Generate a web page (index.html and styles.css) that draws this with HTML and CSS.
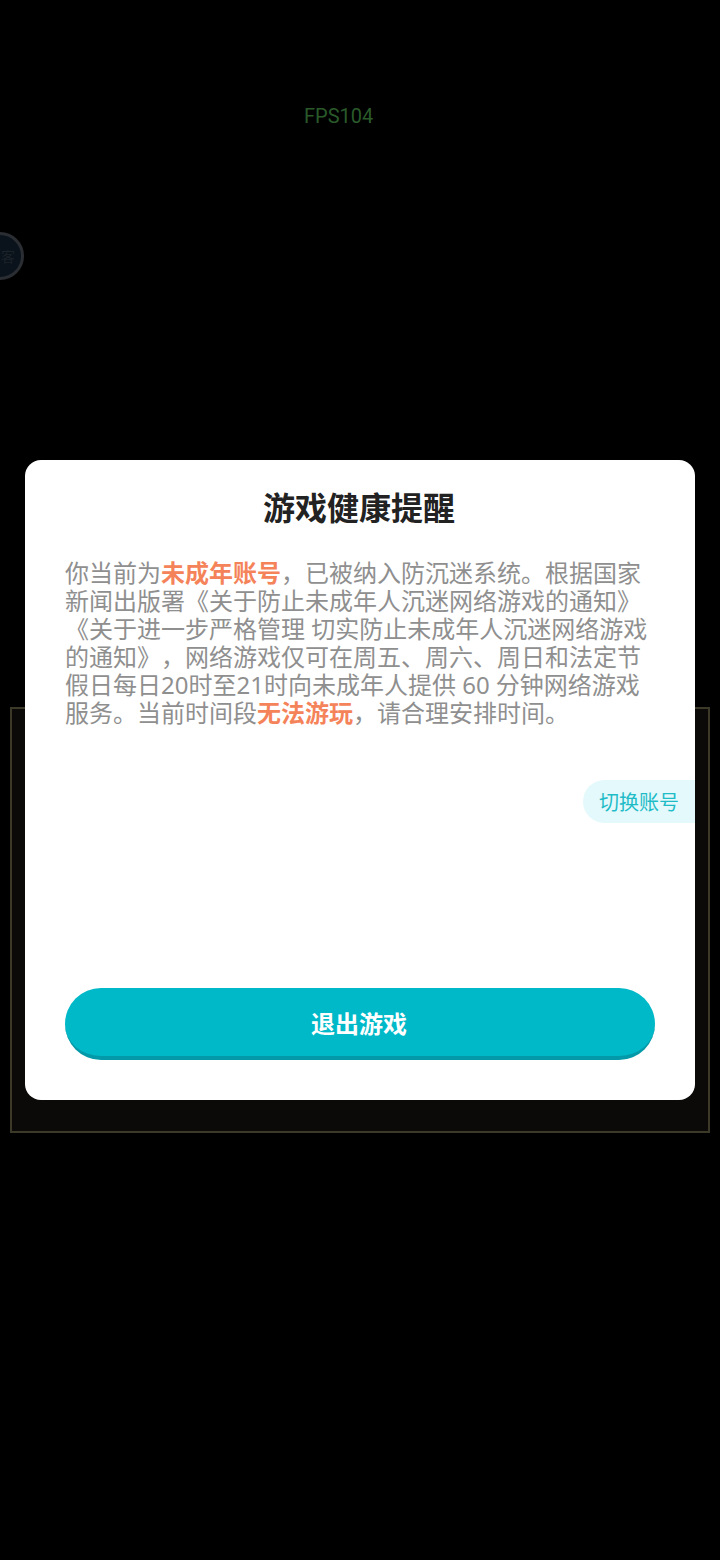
FILE: index.html
```html
<!DOCTYPE html>
<html lang="zh-CN">

<head>
    <meta charset="UTF-8">
    <meta name="viewport" content="width=device-width, initial-scale=1.0">
    <title>游戏健康提醒</title>
    <link rel="stylesheet" href="styles.css">
</head>

<body>
    <div class="fps">FPS104</div>
    <div class="ball"><span>客</span></div>

    <!-- 后面的面板 -->
    <div class="frame"></div>

    <div class="modal">
        <h1 class="title">游戏健康提醒</h1>
        <p class="text">
            你当前为<b>未成年账号</b>，已被纳入防沉迷系统。根据国家<br>
            新闻出版署《关于防止未成年人沉迷网络游戏的通知》<br>
            《关于进一步严格管理 切实防止未成年人沉迷网络游戏<br>
            的通知》，网络游戏仅可在周五、周六、周日和法定节<br>
            假日每日20时至21时向未成年人提供 60 分钟网络游戏<br>
            服务。当前时间段<b>无法游玩</b>，请合理安排时间。
        </p>
        <div class="switch-row">
            <button class="switch">切换账号</button>
        </div>
        <button class="exit">退出游戏</button>
    </div>
</body>

</html>
```

FILE: styles.css
```css
* {
    box-sizing: border-box;
}

body {
    margin: 0;
    height: 1560px;
    overflow: hidden;
    position: relative;
    background-color: #000;
    font-family: "Noto Sans CJK SC", "Noto Sans", sans-serif;
    padding: 707px 10px 0;
}

.fps {
    position: absolute;
    left: 304px;
    top: 103px;
    font-family: Roboto, sans-serif;
    font-size: 20px;
    line-height: 26px;
    color: #2a5a2a;
}

.ball {
    position: absolute;
    left: -24px;
    top: 232px;
    width: 48px;
    height: 48px;
    border-radius: 50%;
    border: 3px solid #2a2e33;
    background-color: #0a121c;
    display: flex;
    align-items: center;
    justify-content: flex-end;
    padding-right: 6px;
    font-size: 14px;
    color: #1b2228;
}

.frame {
    height: 426px;
    border: 2px solid #3d3929;
    background-color: #0c0a08;
}

.modal {
    position: absolute;
    left: 25px;
    top: 460px;
    width: 670px;
    height: 640px;
    padding: 24px 0 40px;
    display: flex;
    flex-direction: column;
    background-color: #fff;
    border-radius: 16px;
}

.title {
    margin: 0;
    padding-right: 2px;
    font-size: 32px;
    font-weight: 700;
    line-height: 44px;
    text-align: center;
    color: #222;
}

.text {
    margin: 31px 0 0 40px;
    font-family: "Noto Sans", "Noto Sans CJK SC", sans-serif;
    font-size: 24px;
    line-height: 28px;
    white-space: nowrap;
    text-spacing-trim: space-all;
    color: #8f8f8f;
}

.text b {
    color: #f5835a;
}

.switch-row {
    display: flex;
    justify-content: flex-end;
    margin-top: 53px;
}

.switch {
    width: 112px;
    height: 43px;
    padding: 0;
    border: none;
    border-radius: 22px 0 0 22px;
    background-color: #e4f9fb;
    color: #1fbcc8;
    font-family: inherit;
    font-size: 20px;
}

.exit {
    width: 590px;
    height: 72px;
    margin: auto 40px 0;
    padding: 0 2px 0 0;
    border: none;
    border-bottom: 4px solid #0499a8;
    border-radius: 36px;
    background-color: #00b9c8;
    color: #fff;
    font-family: inherit;
    font-size: 24px;
    font-weight: 700;
}
```
